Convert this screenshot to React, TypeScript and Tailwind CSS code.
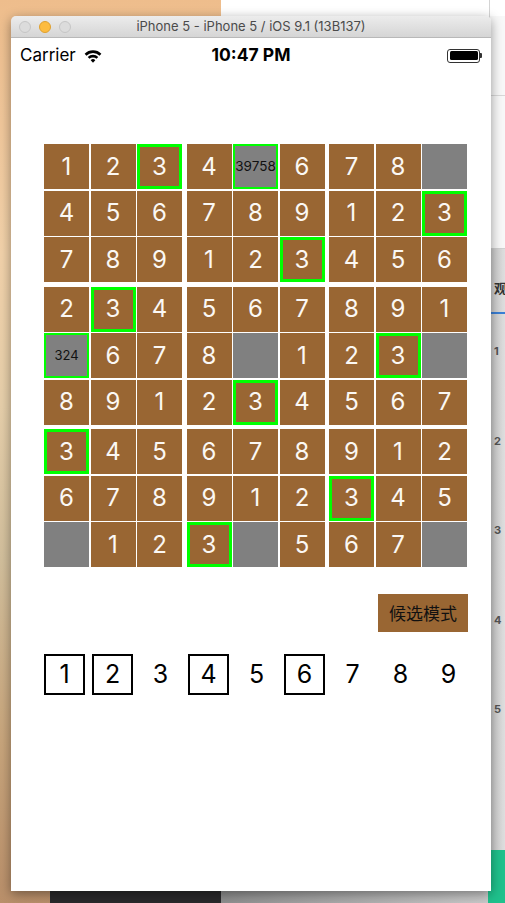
import React from "react";

// "3!" = highlighted, "~txt" = grey cell with candidates, "_" = empty grey cell
const BOARD: string[][] = [
  ["1", "2", "3!", "4", "~39758", "6", "7", "8", "_"],
  ["4", "5", "6", "7", "8", "9", "1", "2", "3!"],
  ["7", "8", "9", "1", "2", "3!", "4", "5", "6"],
  ["2", "3!", "4", "5", "6", "7", "8", "9", "1"],
  ["~324", "6", "7", "8", "_", "1", "2", "3!", "_"],
  ["8", "9", "1", "2", "3!", "4", "5", "6", "7"],
  ["3!", "4", "5", "6", "7", "8", "9", "1", "2"],
  ["6", "7", "8", "9", "1", "2", "3!", "4", "5"],
  ["_", "1", "2", "3!", "_", "5", "6", "7", "_"],
];

const PICKS = [
  { n: 1, boxed: true },
  { n: 2, boxed: true },
  { n: 3, boxed: false },
  { n: 4, boxed: true },
  { n: 5, boxed: false },
  { n: 6, boxed: true },
  { n: 7, boxed: false },
  { n: 8, boxed: false },
  { n: 9, boxed: false },
];

const SF = { fontFamily: "Inter, 'Noto Sans', sans-serif" };

function Cell({ v }: { v: string }) {
  if (v === "_") return <div className="w-[45px] h-[45px] bg-[#808080]" />;
  if (v.startsWith("~")) {
    return (
      <div
        className={`w-[45px] h-[45px] bg-[#808080] border-2 border-[#00ff00] flex items-center justify-center text-[#111] ${
          v.length > 4 ? "text-[13.5px]" : "text-[13px]"
        }`}
      >
        {v.slice(1)}
      </div>
    );
  }
  const hl = v.endsWith("!");
  return (
    <div
      className={`w-[45px] h-[45px] bg-[#996633] flex items-center justify-center text-[#fbf8f4] text-[24px] font-normal ${
        hl ? "border-[3px] border-[#00ff00]" : ""
      }`}
    >
      {hl ? v.slice(0, -1) : v}
    </div>
  );
}

function Board() {
  const bands = [0, 1, 2].map((b) => BOARD.slice(b * 3, b * 3 + 3));
  return (
    <div className="flex flex-col gap-[4.5px]">
      {bands.map((rows, bi) => (
        <div key={bi} className="flex flex-col gap-[1.5px]">
          {rows.map((row, ri) => (
            <div key={ri} className="flex gap-[4.5px]">
              {[0, 1, 2].map((g) => (
                <div key={g} className="flex gap-[1.5px]">
                  {row.slice(g * 3, g * 3 + 3).map((v, ci) => (
                    <Cell key={ci} v={v} />
                  ))}
                </div>
              ))}
            </div>
          ))}
        </div>
      ))}
    </div>
  );
}

function Wifi() {
  return (
    <svg width="18" height="14" viewBox="0 0 17 13">
      <path d="M0.6 4.4 A11.2 11.2 0 0 1 16.4 4.4 L14.7 6.2 A8.7 8.7 0 0 0 2.3 6.2 Z" fill="#000" />
      <path d="M3.5 7.4 A7 7 0 0 1 13.5 7.4 L11.8 9.2 A4.6 4.6 0 0 0 5.2 9.2 Z" fill="#000" />
      <path d="M6.3 10.4 A3.1 3.1 0 0 1 10.7 10.4 L8.5 12.8 Z" fill="#000" />
    </svg>
  );
}

function Battery() {
  return (
    <div className="flex items-center">
      <div className="w-[33px] h-[14px] rounded-[3px] border border-[#333] p-[1.5px]">
        <div className="w-full h-full bg-black rounded-[1.5px]" />
      </div>
      <div className="w-[2px] h-[5px] bg-[#333] rounded-r-[1px]" />
    </div>
  );
}

function Light({ color, ring }: { color: string; ring: string }) {
  return <div className={`w-[12px] h-[12px] rounded-full border ${color} ${ring}`} />;
}

export default function App() {
  return (
    <div className="relative w-[505px] h-[903px] overflow-hidden bg-[#f8f8f8]" style={SF}>
      {/* desktop behind the simulator */}
      <div className="absolute left-0 top-0 w-[221px] h-full bg-[linear-gradient(180deg,#eebd8c_0%,#f2d2aa_28%,#e6cfaa_45%,#d2bf9c_62%,#c8a57c_82%,#b98f6a_100%)]" />
      <div className="absolute left-[50px] top-[891px] w-[171px] h-[12px] bg-[#2a292b]" />
      <div className="absolute left-[221px] top-0 right-0 h-[16px] bg-white" />
      <div className="absolute left-[489px] top-0 w-px h-[95px] bg-[#d4d4d4]" />
      <div className="absolute left-[490px] top-[95px] right-0 h-px bg-[#d8d8d8]" />
      <div className="absolute left-[490px] top-[248px] right-0 h-px bg-[#d0d0d0]" />
      <div className="absolute left-[490px] top-[249px] right-0 bottom-0 bg-[linear-gradient(90deg,#c9c9c9,#dedede)]" />
      <div className="absolute left-[494px] top-[278px] w-[11px] overflow-hidden text-[13px] font-bold text-[#333] whitespace-nowrap" style={{ fontFamily: "'Noto Sans CJK SC', sans-serif" }}>
        观
      </div>
      <div className="absolute left-[490px] top-[312px] right-0 h-[2px] bg-[#3a7fd5]" />
      {[1, 2, 3, 4, 5].map((n, i) => (
        <div key={n} className="absolute left-[494px] text-[11px] font-bold text-[#555]" style={{ top: 343 + i * 89.5 }}>
          {n}
        </div>
      ))}
      <div className="absolute left-[221px] top-[891px] w-[267px] h-[12px] bg-[linear-gradient(90deg,#8f8f8f,#c9c9c9)]" />
      <div className="absolute left-[488px] top-[850px] right-0 bottom-0 bg-[#1fc18c]" />

      {/* simulator window */}
      <div className="absolute left-[11px] top-[16px] w-[480px] flex flex-col rounded-t-[5px] shadow-[0_3px_12px_rgba(0,0,0,0.4)]">
        <div className="relative h-[22px] rounded-t-[5px] bg-[linear-gradient(180deg,#ececec,#d5d5d5)] border-b border-[#b8b8b8] flex items-center justify-center">
          <div className="absolute left-[8px] top-[5px] flex gap-[8px]">
            <Light color="bg-[#dcdcdc]" ring="border-[#c6c6c6]" />
            <Light color="bg-[#fdbc40]" ring="border-[#dfa02f]" />
            <Light color="bg-[#dcdcdc]" ring="border-[#c6c6c6]" />
          </div>
          <span className="text-[13px] text-[#4b4b4b]">iPhone 5 - iPhone 5 / iOS 9.1 (13B137)</span>
        </div>

        <div className="h-[853px] bg-white flex flex-col">
          <div className="h-[32px] pt-[3px] grid grid-cols-[1fr_auto_1fr] items-center px-[9px]">
            <div className="flex items-center gap-[8px] text-[17px] text-black">
              Carrier
              <Wifi />
            </div>
            <div className="text-[17.5px] font-bold text-black">10:47 PM</div>
            <div className="flex justify-end">
              <Battery />
            </div>
          </div>

          <div className="ml-[33px] mt-[74px]">
            <Board />
          </div>

          <div className="flex justify-end mt-[27px] pr-[23px]">
            <button
              className="w-[90px] h-[38px] bg-[#996633] text-[17px] text-[#111] flex items-center justify-center"
              style={{ fontFamily: "'Noto Sans CJK SC', sans-serif" }}
            >
              候选模式
            </button>
          </div>

          <div className="ml-[33px] mt-[22px] flex gap-[7px]">
            {PICKS.map((p) => (
              <div
                key={p.n}
                className={`w-[41px] h-[41px] flex items-center justify-center text-[25px] font-normal text-black ${
                  p.boxed ? "border-2 border-black" : ""
                }`}
              >
                {p.n}
              </div>
            ))}
          </div>
        </div>
      </div>
    </div>
  );
}
